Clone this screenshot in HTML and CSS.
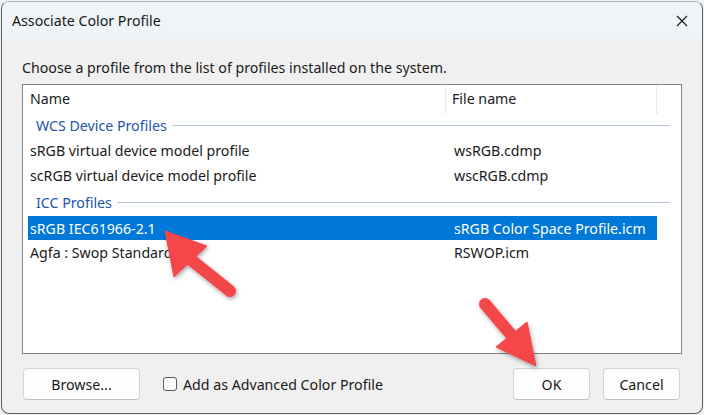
FILE: index.html
```html
<!DOCTYPE html>
<html>
<head>
<meta charset="utf-8">
<link rel="stylesheet" href="styles.css">
</head>
<body>
<div class="window">
  <div class="titlebar">
    <span class="title">Associate Color Profile</span>
    <span class="close"><svg width="12" height="12" viewBox="0 0 12 12"><path d="M1 1 L11 11 M11 1 L1 11" stroke="#1a1a1a" stroke-width="1.1" fill="none"/></svg></span>
  </div>
  <div class="content">
    <p class="prompt">Choose a profile from the list of profiles installed on the system.</p>
    <div class="listbox">
      <div class="header">
        <div class="hcol hname">Name</div>
        <div class="hcol hfile">File name</div>
        <div class="hcol hrest"></div>
      </div>
      <div class="group g1"><span class="gtext">WCS Device Profiles</span><span class="grule"></span></div>
      <div class="row"><span class="c1">sRGB virtual device model profile</span><span class="c2">wsRGB.cdmp</span></div>
      <div class="row"><span class="c1">scRGB virtual device model profile</span><span class="c2">wscRGB.cdmp</span></div>
      <div class="group g2"><span class="gtext">ICC Profiles</span><span class="grule"></span></div>
      <div class="row selected"><span class="c1">sRGB IEC61966-2.1</span><span class="c2">sRGB Color Space Profile.icm</span></div>
      <div class="row"><span class="c1">Agfa : Swop Standard</span><span class="c2">RSWOP.icm</span></div>
    </div>
    <div class="footer">
      <button class="btn browse">Browse...</button>
      <label class="check"><span class="box"></span><span>Add as Advanced Color Profile</span></label>
      <span class="spacer"></span>
      <button class="btn">OK</button>
      <button class="btn">Cancel</button>
    </div>
  </div>
</div>
<svg class="arrows" width="704" height="415" viewBox="0 0 704 415">
  <defs>
    <filter id="sh" x="-20%" y="-20%" width="140%" height="140%">
      <feDropShadow dx="1" dy="2" stdDeviation="2" flood-color="#000" flood-opacity="0.35"/>
    </filter>
  </defs>
  <g filter="url(#sh)" fill="#f4464a" stroke="#f4464a">
    <line x1="190" y1="259" x2="230" y2="291" stroke-width="12" stroke-linecap="round"/>
    <polygon points="165,231 207,246 174,277" stroke-width="1" stroke-linejoin="round"/>
    <line x1="485" y1="304" x2="513" y2="337" stroke-width="12" stroke-linecap="round"/>
    <polygon points="536,366 527,322 496,347" stroke-width="1" stroke-linejoin="round"/>
  </g>
</svg>
</body>
</html>
```
FILE: styles.css
```css
html, body {
  margin: 0;
  padding: 0;
}
body {
  width: 704px;
  height: 415px;
  background: #f3f3f3;
  padding: 1px 0 0 1px;
  box-sizing: border-box;
  position: relative;
  font-family: "Noto Sans", "Segoe UI", sans-serif;
  font-size: 14.2px;
  color: #1a1a1a;
  overflow: hidden;
}
.window {
  width: 702px;
  height: 413px;
  box-sizing: border-box;
  border: 1px solid #5c5c5c;
  border-top-color: #b9b9b9;
  border-radius: 8px;
  background: #f0f0f0;
  overflow: hidden;
  display: flex;
  flex-direction: column;
}
.titlebar {
  height: 37px;
  flex: none;
  background: #eef4f8;
  display: flex;
  align-items: center;
  justify-content: space-between;
  padding: 0 14px 0 10px;
}
.title {
  font-size: 14.2px;
  color: #1a1a1a;
}
.close {
  display: flex;
  width: 12px;
  height: 12px;
}
.content {
  flex: 1;
  display: flex;
  flex-direction: column;
  padding: 19px 20px 12px 20px;
}
.prompt {
  margin: 0 0 6px 0;
  line-height: 20px;
  height: 20px;
}
.listbox {
  height: 270px;
  box-sizing: border-box;
  border: 1px solid #838383;
  background: #ffffff;
  display: flex;
  flex-direction: column;
}
.header {
  display: flex;
  height: 28px;
  flex: none;
  padding-top: 1px;
  box-sizing: border-box;
}
.hcol {
  line-height: 26px;
  box-sizing: border-box;
}
.hname {
  width: 423px;
  padding-left: 7px;
  border-right: 1px dotted #d4d4d4;
}
.hfile {
  width: 211px;
  padding-left: 6px;
  border-right: 1px dotted #d4d4d4;
}
.group {
  display: flex;
  align-items: center;
  margin-left: 13px;
  margin-right: 11px;
  color: #2253ad;
}
.g1 { height: 25px; }
.g2 { height: 28px; }
.gtext {
  flex: none;
}
.grule {
  flex: 1;
  height: 1px;
  background: #b3c4e2;
  margin-left: 5px;
}
.row {
  display: flex;
  height: 25px;
  align-items: center;
  margin-left: 5px;
  width: 629px;
}
.row.selected {
  background: #0078d7;
  color: #ffffff;
  height: 24px;
}
.c1 {
  width: 422px;
  padding-left: 2px;
  flex: none;
}
.c2 {
  padding-left: 2px;
}
.footer {
  display: flex;
  align-items: center;
  margin-top: 14px;
  height: 32px;
}
.btn {
  font-family: inherit;
  font-size: 14.2px;
  color: #1a1a1a;
  height: 32px;
  width: 77px;
  box-sizing: border-box;
  border: 1px solid #d3d3d3;
  border-bottom-color: #c2c2c2;
  border-radius: 4px;
  background: #fdfdfd;
  padding: 0;
  margin-left: 13px;
}
.btn.browse {
  width: 117px;
  margin-left: 1px;
}
.check {
  display: flex;
  align-items: center;
  margin-left: 23px;
}
.box {
  width: 14px;
  height: 14px;
  box-sizing: border-box;
  border: 1px solid #5a5a5a;
  border-radius: 3px;
  background: #fbfbfb;
  margin-right: 6px;
}
.spacer {
  flex: 1;
}
.footer .btn:last-child {
  margin-right: 2px;
}
.arrows {
  position: absolute;
  left: 0;
  top: 0;
}
```
